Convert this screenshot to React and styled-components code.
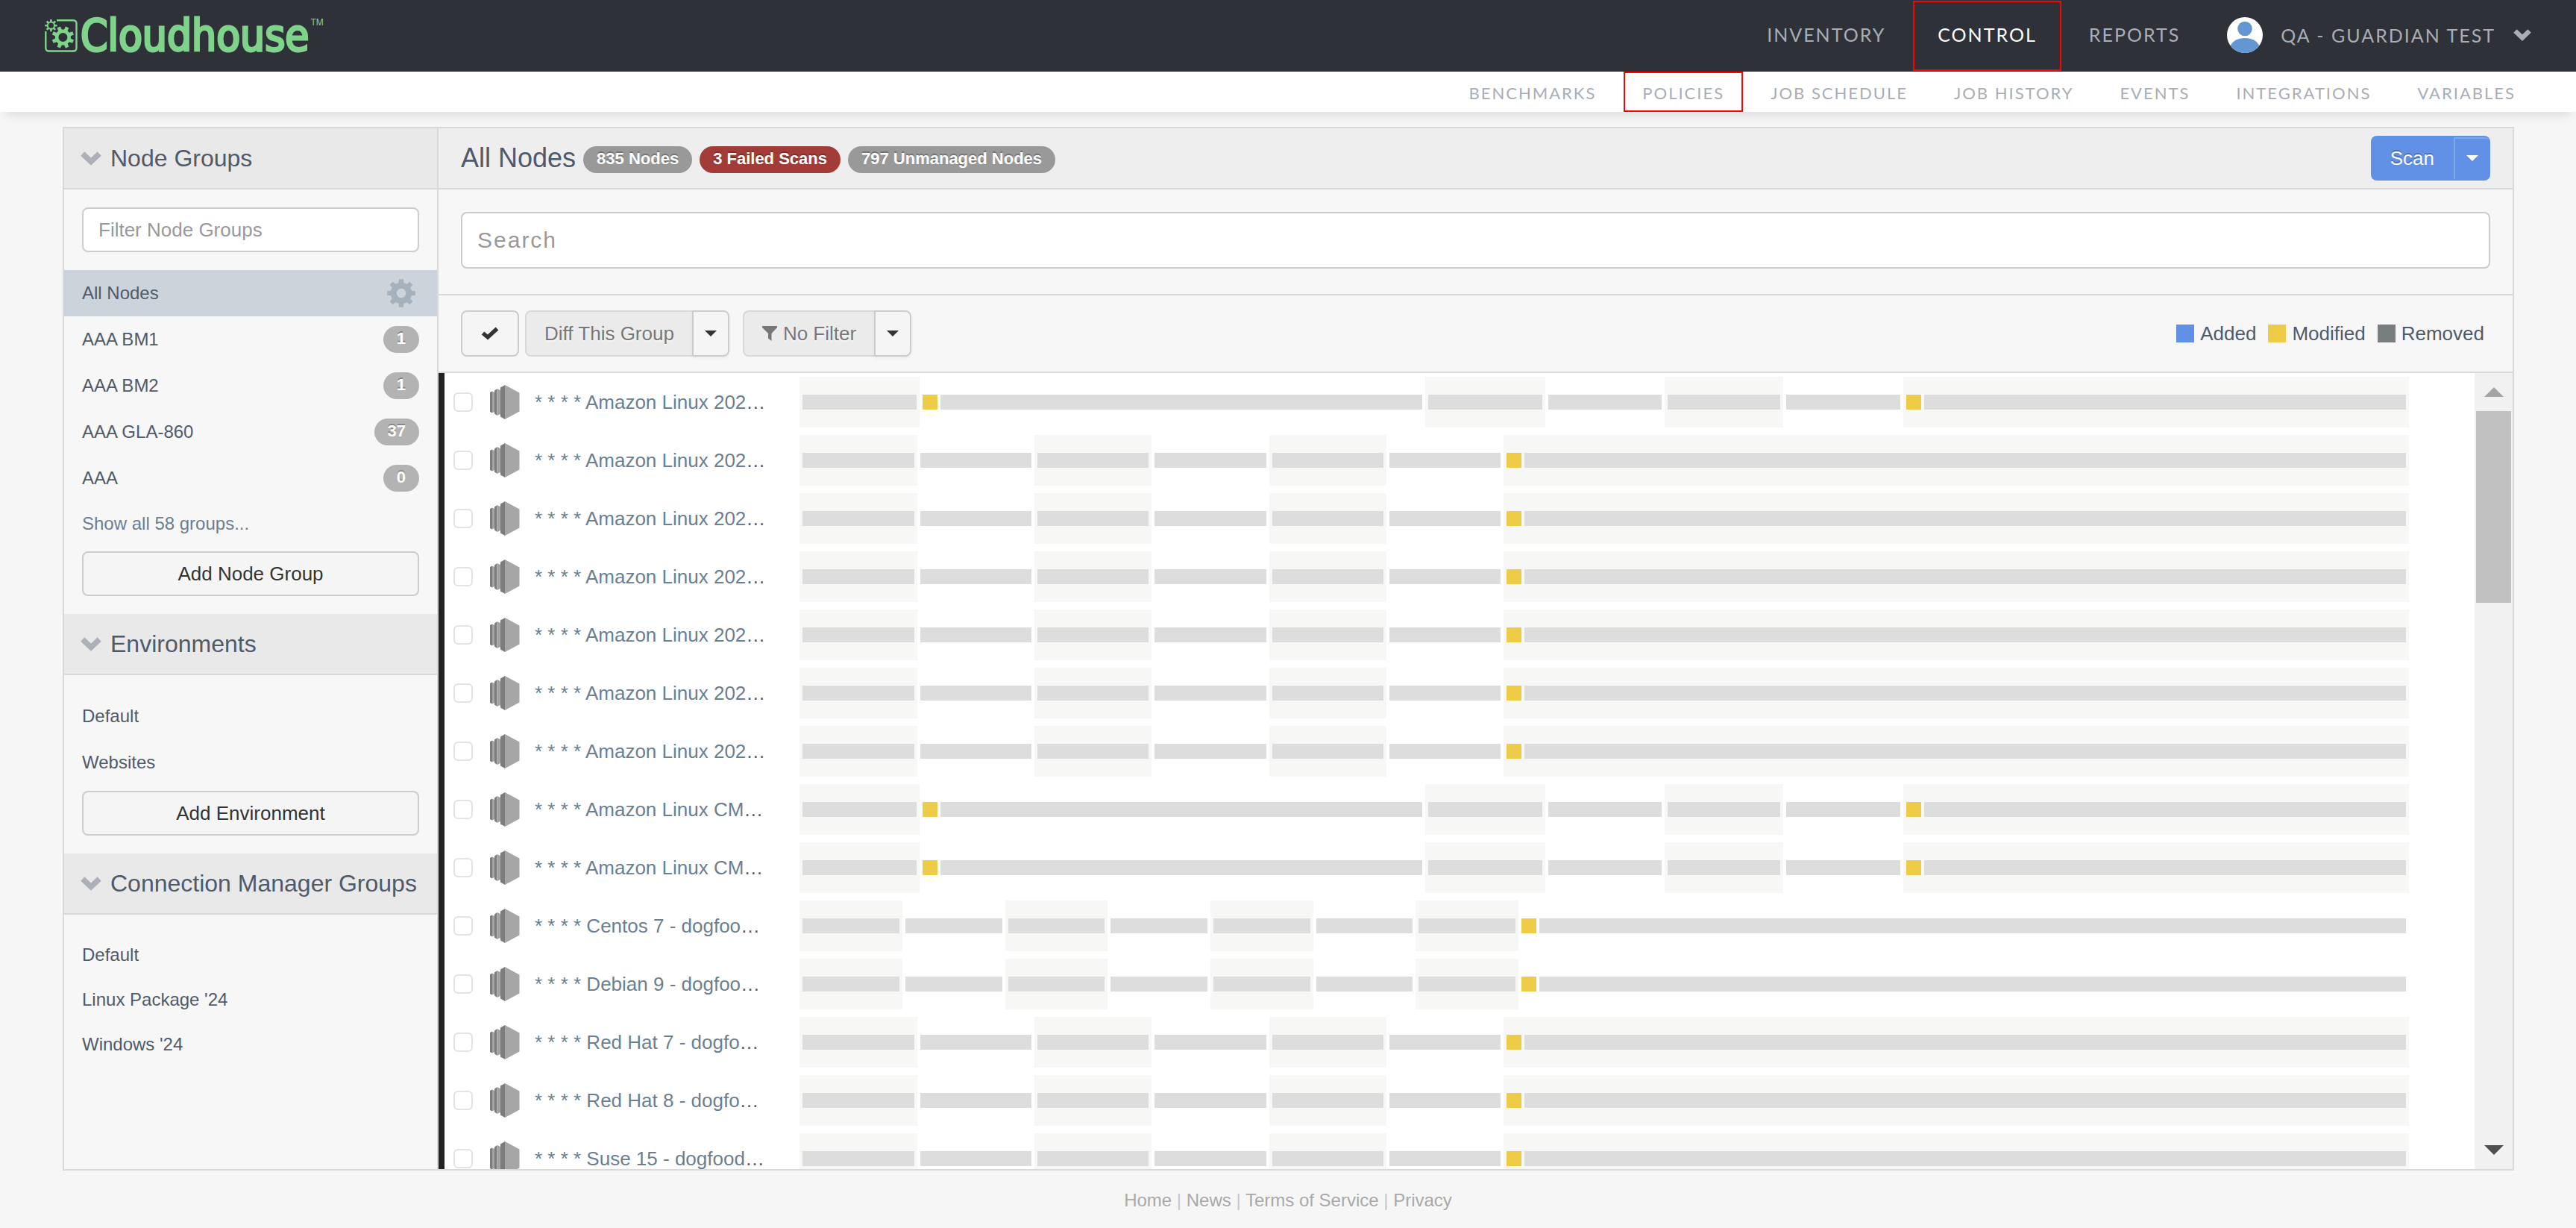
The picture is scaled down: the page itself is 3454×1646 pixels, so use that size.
import React from "react"
import styled, { createGlobalStyle, ThemeProvider } from "styled-components"

const theme = {
  colors: {
    dark: "#2f3139",
    brand: "#7fd38a",
    page: "#f6f6f6",
    panel: "#f7f7f7",
    line: "#d9d9d9",
    text: "#4f5a6b",
    link: "#6b7f91",
    navText: "#a9adb5",
    added: "#6091e7",
    modified: "#efcc47",
    removed: "#787d80",
    bar: "#dddddd",
    highlight: "#ff0000",
  },
  fonts: {
    main: `"Liberation Sans", Arial, sans-serif`,
    nav: `Lato, sans-serif`,
    logo: `"DejaVu Sans Condensed", "DejaVu Sans", sans-serif`,
  },
}

const mainNav = [
  { label: "Inventory" },
  { label: "Control", active: true, marked: true },
  { label: "Reports" },
]

const subNav = [
  { label: "Benchmarks" },
  { label: "Policies", marked: true },
  { label: "Job Schedule" },
  { label: "Job History" },
  { label: "Events" },
  { label: "Integrations" },
  { label: "Variables" },
]

const nodeGroups = [
  { name: "AAA BM1", count: 1 },
  { name: "AAA BM2", count: 1 },
  { name: "AAA GLA-860", count: 37 },
  { name: "AAA", count: 0 },
]

const environments = ["Default", "Websites"]

const managerGroups = ["Default", "Linux Package '24", "Windows '24"]

// Every block is one scan period, `size` is its share of the timeline
const block = (size, modified = false) => ({ size, modified })

const timelines = {
  early: [
    block(161),
    block(678, true),
    block(161),
    block(160),
    block(159),
    block(161),
    block(678, true),
  ],
  six: [
    block(158),
    block(157),
    block(157),
    block(158),
    block(157),
    block(157),
    block(1214, true),
  ],
  seven: [
    block(138),
    block(138),
    block(137),
    block(138),
    block(138),
    block(137),
    block(138),
    block(1194, true),
  ],
}

const nodes = [
  { name: "* * * * Amazon Linux 202", timeline: "early" },
  { name: "* * * * Amazon Linux 202", timeline: "six" },
  { name: "* * * * Amazon Linux 202", timeline: "six" },
  { name: "* * * * Amazon Linux 202", timeline: "six" },
  { name: "* * * * Amazon Linux 202", timeline: "six" },
  { name: "* * * * Amazon Linux 202", timeline: "six" },
  { name: "* * * * Amazon Linux 202", timeline: "six" },
  { name: "* * * * Amazon Linux CM", timeline: "early" },
  { name: "* * * * Amazon Linux CM", timeline: "early" },
  { name: "* * * * Centos 7 - dogfoo", timeline: "seven" },
  { name: "* * * * Debian 9 - dogfoo", timeline: "seven" },
  { name: "* * * * Red Hat 7 - dogfo", timeline: "six" },
  { name: "* * * * Red Hat 8 - dogfo", timeline: "six" },
  { name: "* * * * Suse 15 - dogfood", timeline: "six" },
]

const gearPath = (cx, cy, outer, inner, hole, teeth) => {
  const step = (Math.PI * 2) / teeth
  const at = (r, a) =>
    `${(cx + r * Math.sin(a)).toFixed(2)} ${(cy - r * Math.cos(a)).toFixed(2)}`
  const points = []
  for (let i = 0; i < teeth; i++) {
    const a = i * step
    points.push(
      at(inner, a - step * 0.3),
      at(outer, a - step * 0.2),
      at(outer, a + step * 0.2),
      at(inner, a + step * 0.3)
    )
  }
  return `M${points.join("L")}ZM${cx - hole} ${cy}a${hole} ${hole} 0 1 0 ${
    hole * 2
  } 0a${hole} ${hole} 0 1 0 ${-hole * 2} 0Z`
}

const LogoMark = () => (
  <svg width="44" height="46" viewBox="0 0 44 46" aria-hidden="true">
    <path
      d="M16 2.2H38.5a4 4 0 0 1 4 4V39.5a4 4 0 0 1-4 4H5.3a4 4 0 0 1-4-4V17"
      fill="none"
      stroke="currentColor"
      strokeWidth="2.4"
    />
    <path
      d={gearPath(8.4, 9.2, 8.2, 5.6, 3.6, 8)}
      fill="currentColor"
      fillRule="evenodd"
    />
    <path
      d={gearPath(24.4, 25, 15, 10.6, 6, 8)}
      fill="currentColor"
      fillRule="evenodd"
      transform="rotate(22.5 24.4 25)"
    />
  </svg>
)

const Avatar = () => (
  <svg width="48" height="48" viewBox="0 0 48 48" aria-hidden="true">
    <clipPath id="avatar-clip">
      <circle cx="24" cy="24" r="24" />
    </clipPath>
    <g clipPath="url(#avatar-clip)">
      <rect width="48" height="48" fill="#fff" />
      <circle cx="24" cy="15.5" r="9.8" fill="#6297d2" />
      <ellipse cx="24" cy="42" rx="20" ry="14" fill="#6297d2" />
    </g>
  </svg>
)

const Chevron = ({ size = 28 }) => (
  <svg width={size} height={(size * 19) / 28} viewBox="0 0 28 19" aria-hidden="true">
    <path d="M2.8 3L14 13.6L25.2 3" fill="none" stroke="currentColor" strokeWidth="7.4" />
  </svg>
)

const Gear = () => (
  <svg width="38" height="38" viewBox="0 0 38 38" aria-hidden="true">
    <path
      d={gearPath(19, 19, 19, 14.4, 6.2, 8)}
      fill="currentColor"
      fillRule="evenodd"
    />
  </svg>
)

const Check = () => (
  <svg width="24" height="18" viewBox="0 0 24 18" aria-hidden="true">
    <path d="M2.5 8.5L9 14L21.5 2.5" fill="none" stroke="#333" strokeWidth="5.4" />
  </svg>
)

const Funnel = () => (
  <svg width="20" height="20" viewBox="0 0 20 20" aria-hidden="true">
    <path d="M0 0H20V2L12.5 10V20L8 16.5V10L0 2Z" fill="currentColor" />
  </svg>
)

const Caret = () => (
  <svg width="16" height="8" viewBox="0 0 16 8" aria-hidden="true">
    <path d="M0 0H16L8 8Z" fill="currentColor" />
  </svg>
)

const ServerIcon = () => (
  <svg width="40" height="46" viewBox="0 0 40 46" aria-hidden="true">
    <path d="M0 10L3 8.5V37.5L0 36Z" fill="#7c7c7c" />
    <path d="M3 8.5L6 10V36L3 37.5Z" fill="#a3a3a3" />
    <path d="M6 7.5L9.5 5V41L6 38.5Z" fill="#7c7c7c" />
    <path d="M9.5 5L14 7V39L9.5 41Z" fill="#a3a3a3" />
    <path d="M14 3.5L20 0V46L14 42.5Z" fill="#7c7c7c" />
    <path d="M20 0L39.5 10.5V35.5L20 46Z" fill="#a6a6a6" />
  </svg>
)

const SidebarHead = ({ children }) => (
  <SideHeading>
    <Chevron />
    {children}
  </SideHeading>
)

const NodeRow = ({ name, timeline }) => (
  <Row>
    <NodeCheck type="checkbox" aria-label={`Select ${name}`} />
    <ServerIcon />
    <NodeName>
      <a href="#node">{name}</a>…
    </NodeName>
    <Timeline $sizes={timelines[timeline].map(({ size }) => size)}>
      {timelines[timeline].map(({ modified }, i) => (
        <Block key={i}>
          {modified ? <Marker /> : null}
          <Bar />
        </Block>
      ))}
    </Timeline>
  </Row>
)

const App = () => (
  <ThemeProvider theme={theme}>
    <GlobalStyle />
    <Page>
      <TopBar>
        <Logo href="#home">
          <LogoMark />
          <LogoText>Cloudhouse</LogoText>
          <Trademark>TM</Trademark>
        </Logo>
        <MainNav>
          {mainNav.map(({ label, active, marked }) => (
            <MainLink key={label} href="#nav" $active={active} $marked={marked}>
              {label}
            </MainLink>
          ))}
          <Account>
            <Avatar />
            QA - Guardian Test
            <Chevron size={24} />
          </Account>
        </MainNav>
      </TopBar>
      <SubNav>
        {subNav.map(({ label, marked }) => (
          <SubLink key={label} href="#sub" $marked={marked}>
            {label}
          </SubLink>
        ))}
      </SubNav>

      <Panel>
        <Sidebar>
          <SidebarHead>Node Groups</SidebarHead>
          <FilterWrapper>
            <FilterInput
              type="text"
              placeholder="Filter Node Groups"
              aria-label="Filter Node Groups"
            />
          </FilterWrapper>
          <SideList>
            <SideItem $selected>
              <a href="#all">All Nodes</a>
              <GearButton aria-label="Group settings">
                <Gear />
              </GearButton>
            </SideItem>
            {nodeGroups.map(({ name, count }) => (
              <SideItem key={name}>
                <a href="#group">{name}</a>
                <Badge $tone="#b3b3b3">{count}</Badge>
              </SideItem>
            ))}
            <SideItem $muted $compact>
              <a href="#groups">Show all 58 groups...</a>
            </SideItem>
          </SideList>
          <SideButton>Add Node Group</SideButton>

          <SidebarHead>Environments</SidebarHead>
          <SideList $spaced>
            {environments.map(name => (
              <SideItem key={name}>
                <a href="#environment">{name}</a>
              </SideItem>
            ))}
          </SideList>
          <SideButton>Add Environment</SideButton>

          <SidebarHead>Connection Manager Groups</SidebarHead>
          <SideList $spaced>
            {managerGroups.map(name => (
              <SideItem key={name} $compact>
                <a href="#manager">{name}</a>
              </SideItem>
            ))}
          </SideList>
        </Sidebar>

        <Main>
          <MainHead>
            <Title>All Nodes</Title>
            <HeadBadge $tone="#999999">835 Nodes</HeadBadge>
            <HeadBadge $tone="#a33c36">3 Failed Scans</HeadBadge>
            <HeadBadge $tone="#999999">797 Unmanaged Nodes</HeadBadge>
            <ScanGroup>
              <ScanButton>Scan</ScanButton>
              <ScanToggle aria-label="Scan options">
                <Caret />
              </ScanToggle>
            </ScanGroup>
          </MainHead>
          <SearchWrapper>
            <SearchInput type="text" placeholder="Search" aria-label="Search" />
          </SearchWrapper>
          <Toolbar>
            <CheckButton aria-label="Select all">
              <Check />
            </CheckButton>
            <ButtonGroup>
              <GroupButton disabled>Diff This Group</GroupButton>
              <GroupToggle aria-label="Diff options">
                <Caret />
              </GroupToggle>
            </ButtonGroup>
            <ButtonGroup>
              <GroupButton disabled>
                <Funnel />
                No Filter
              </GroupButton>
              <GroupToggle aria-label="Filter options">
                <Caret />
              </GroupToggle>
            </ButtonGroup>
            <Legend>
              <LegendItem $color={theme.colors.added}>Added</LegendItem>
              <LegendItem $color={theme.colors.modified}>Modified</LegendItem>
              <LegendItem $color={theme.colors.removed}>Removed</LegendItem>
            </Legend>
          </Toolbar>
          <ListArea>
            <Rows>
              {nodes.map((node, i) => (
                <NodeRow key={i} {...node} />
              ))}
            </Rows>
            <Scrollbar>
              <ScrollArrow $color="#a3a3a3" aria-label="Scroll up">
                <svg width="26" height="13" viewBox="0 0 26 13">
                  <path d="M13 0L26 13H0Z" fill="currentColor" />
                </svg>
              </ScrollArrow>
              <ScrollTrack>
                <ScrollThumb />
              </ScrollTrack>
              <ScrollArrow $color="#505050" aria-label="Scroll down">
                <svg width="26" height="13" viewBox="0 0 26 13">
                  <path d="M0 0H26L13 13Z" fill="currentColor" />
                </svg>
              </ScrollArrow>
            </Scrollbar>
          </ListArea>
        </Main>
      </Panel>

      <Footer>
        <a href="#home">Home</a> | <a href="#news">News</a> |{" "}
        <a href="#terms">Terms of Service</a> | <a href="#privacy">Privacy</a>
      </Footer>
    </Page>
  </ThemeProvider>
)

const GlobalStyle = createGlobalStyle`
  * {
    box-sizing: border-box;
  }

  body {
    margin: 0;
    background-color: ${({ theme }) => theme.colors.page};
    color: ${({ theme }) => theme.colors.text};
    font-family: ${({ theme }) => theme.fonts.main};
    font-size: 26px;
  }

  a {
    color: inherit;
    text-decoration: none;
  }

  button,
  input {
    margin: 0;
    font-family: inherit;
    font-size: 26px;
  }

  svg {
    display: block;
    flex-shrink: 0;
  }
`

const Page = styled.div`
  display: flex;
  flex-direction: column;
  height: 100vh;
`

const TopBar = styled.header`
  display: flex;
  justify-content: space-between;
  flex-shrink: 0;
  height: 96px;
  padding: 0 60px;
  background-color: ${({ theme }) => theme.colors.dark};
`

const Logo = styled.a`
  display: flex;
  align-items: center;
  color: ${({ theme }) => theme.colors.brand};
`

const LogoText = styled.span`
  margin-left: 4px;
  font-family: ${({ theme }) => theme.fonts.logo};
  font-size: 58px;
  line-height: 64px;
  -webkit-text-stroke: 3px currentColor;
`

const Trademark = styled.span`
  align-self: flex-start;
  margin: 22px 0 0 2px;
  font-size: 12px;
  line-height: 16px;
`

const MainNav = styled.nav`
  display: flex;
  align-items: center;
  gap: 4px;
  color: ${({ theme }) => theme.colors.navText};
  font-family: ${({ theme }) => theme.fonts.nav};
  font-size: 25px;
  letter-spacing: 2px;
  text-transform: uppercase;
`

const MainLink = styled.a`
  display: flex;
  align-items: center;
  height: 94px;
  padding: 0 31px 4px;
  border: 2px solid
    ${({ $marked, theme }) => ($marked ? theme.colors.highlight : "transparent")};
  color: ${({ $active }) => ($active ? "#fff" : "inherit")};
`

const Account = styled.button`
  display: flex;
  align-items: center;
  gap: 24px;
  margin-left: 26px;
  padding: 0 0 2px;
  border: 0;
  background: none;
  color: inherit;
  font-size: 25px;
  letter-spacing: inherit;
  text-transform: inherit;
`

const SubNav = styled.nav`
  display: flex;
  justify-content: flex-end;
  gap: 12px;
  flex-shrink: 0;
  height: 54px;
  padding: 0 56px;
  background-color: #fff;
  box-shadow: 0 10px 16px -8px rgba(0, 0, 0, 0.14);
  font-family: ${({ theme }) => theme.fonts.nav};
  font-size: 22px;
  letter-spacing: 2px;
  text-transform: uppercase;
`

const SubLink = styled.a`
  display: flex;
  align-items: center;
  padding: 2px 23px 0;
  border: 2px solid
    ${({ $marked, theme }) => ($marked ? theme.colors.highlight : "transparent")};
  color: ${({ theme }) => theme.colors.navText};
`

const Panel = styled.div`
  display: flex;
  flex: 1;
  min-height: 0;
  margin: 20px 83px 0 84px;
  border: 2px solid ${({ theme }) => theme.colors.line};
  background-color: ${({ theme }) => theme.colors.panel};
`

const Sidebar = styled.aside`
  flex-shrink: 0;
  width: 502px;
  border-right: 2px solid ${({ theme }) => theme.colors.line};
  overflow: hidden;
`

const SideHeading = styled.h2`
  display: flex;
  align-items: center;
  gap: 12px;
  height: 82px;
  margin: 0;
  padding-left: 22px;
  border-bottom: 2px solid ${({ theme }) => theme.colors.line};
  background-color: #e9e9e9;
  font-size: 32px;
  font-weight: normal;
  white-space: nowrap;

  svg {
    color: #adb0b8;
  }
`

const FilterWrapper = styled.div`
  padding: 24px;
`

const FilterInput = styled.input`
  display: block;
  width: 100%;
  height: 60px;
  padding: 0 20px;
  border: 2px solid #cccccc;
  border-radius: 8px;
  background-color: #fff;

  &::placeholder {
    color: #999999;
  }
`

const SideList = styled.ul`
  margin: 0;
  padding: ${({ $spaced }) => ($spaced ? "24px 0 0" : "0")};
  list-style-type: none;
`

const SideItem = styled.li`
  display: flex;
  align-items: center;
  justify-content: space-between;
  height: ${({ $compact }) => ($compact ? "60px" : "62px")};
  padding: 0 24px;
  background-color: ${({ $selected }) => ($selected ? "#ccd3db" : "transparent")};
  color: ${({ $muted, theme }) => ($muted ? theme.colors.link : "inherit")};
  font-size: 24px;
`

const GearButton = styled.button`
  padding: 0 5px;
  border: 0;
  background: none;
  color: #a5b2bd;
`

const Badge = styled.span`
  height: 36px;
  padding: 0 18px;
  border-radius: 18px;
  background-color: ${({ $tone }) => $tone};
  color: #fff;
  font-size: 22px;
  font-weight: bold;
  line-height: 34px;
  text-shadow: 0 -2px 0 rgba(0, 0, 0, 0.25);
`

const HeadBadge = styled(Badge)`
  margin-top: 4px;
`

const Button = styled.button`
  display: flex;
  align-items: center;
  justify-content: center;
  height: 62px;
  border: 2px solid #cccccc;
  border-radius: 8px;
  background-color: #f5f5f5;
  color: #333333;
  text-shadow: 0 2px 2px rgba(255, 255, 255, 0.75);
`

const SideButton = styled(Button)`
  width: 452px;
  height: 60px;
  margin: 7px 24px 24px;
`

const Main = styled.main`
  display: flex;
  flex: 1;
  flex-direction: column;
  min-width: 0;
`

const MainHead = styled.div`
  display: flex;
  align-items: center;
  gap: 10px;
  flex-shrink: 0;
  height: 82px;
  padding: 0 30px;
  border-bottom: 2px solid ${({ theme }) => theme.colors.line};
  background-color: #eeeeee;
`

const Title = styled.h1`
  margin: 0;
  font-size: 36px;
  font-weight: normal;
`

const ScanGroup = styled.div`
  display: flex;
  margin-left: auto;
`

const ScanButton = styled(Button)`
  height: 60px;
  padding: 0 24px;
  border: 2px solid ${({ theme }) => theme.colors.added};
  border-right: 0;
  border-radius: 8px 0 0 8px;
  background-color: ${({ theme }) => theme.colors.added};
  color: #fff;
  text-shadow: 0 -2px 0 rgba(0, 0, 0, 0.25);
`

const ScanToggle = styled(ScanButton)`
  width: 51px;
  padding: 0;
  border-radius: 0 8px 8px 0;
  box-shadow: inset 2px 2px 0 rgba(255, 255, 255, 0.2);
`

const SearchWrapper = styled.div`
  flex-shrink: 0;
  padding: 30px 30px 34px;
  border-bottom: 2px solid ${({ theme }) => theme.colors.line};
`

const SearchInput = styled(FilterInput)`
  height: 76px;
  font-size: 30px;
  letter-spacing: 2px;
`

const Toolbar = styled.div`
  display: flex;
  align-items: center;
  flex-shrink: 0;
  height: 104px;
  padding: 0 30px;
  border-bottom: 2px solid ${({ theme }) => theme.colors.line};
`

const CheckButton = styled(Button)`
  width: 78px;
  margin-right: 8px;
`

const ButtonGroup = styled.div`
  display: flex;
  margin-right: 18px;
`

const GroupButton = styled(Button)`
  gap: 8px;
  padding: 0 24px;
  border-color: #d9d9d9;
  border-right: 0;
  border-radius: 8px 0 0 8px;
  background-color: #ebebeb;
  color: #777777;
`

const GroupToggle = styled(Button)`
  width: 50px;
  padding: 0;
  border-radius: 0 8px 8px 0;
  box-shadow: 0 2px 4px rgba(0, 0, 0, 0.05);
`

const Legend = styled.div`
  display: flex;
  gap: 16px;
  margin-left: auto;
  padding-right: 8px;
`

const LegendItem = styled.span`
  display: flex;
  align-items: center;
  gap: 8px;

  &:before {
    content: "";
    width: 24px;
    height: 24px;
    background-color: ${({ $color }) => $color};
  }
`

const ListArea = styled.div`
  display: flex;
  flex: 1;
  min-height: 0;
  border-left: 8px solid #222222;
  background-color: #fff;
`

const Rows = styled.ul`
  flex: 1;
  min-width: 0;
  margin: 0;
  padding: 0 88px 0 12px;
  list-style-type: none;
  overflow: hidden;
`

const Row = styled.li`
  display: flex;
  align-items: center;
  height: 78px;
`

const NodeCheck = styled.input`
  flex-shrink: 0;
  width: 26px;
  height: 26px;
  margin-right: 23px;
  border: 2px solid #e3e3e3;
  border-radius: 6px;
  background-color: #fff;
  appearance: none;
`

const NodeName = styled.span`
  flex-shrink: 0;
  width: 375px;
  padding-left: 20px;
  white-space: nowrap;

  a {
    color: ${({ theme }) => theme.colors.link};
  }
`

const Timeline = styled.div`
  display: grid;
  grid-template-columns: ${({ $sizes }) =>
    $sizes.map(size => `minmax(0, ${size}fr)`).join(" ")};
  flex: 1;
  min-width: 0;
`

const Block = styled.div`
  display: flex;
  align-items: center;
  gap: 4px;
  height: 68px;
  padding: 0 4px;

  &:nth-child(odd) {
    background-color: #f7f7f5;
  }
`

const Bar = styled.div`
  flex: 1;
  height: 20px;
  background-color: ${({ theme }) => theme.colors.bar};
`

const Marker = styled.div`
  width: 20px;
  height: 20px;
  background-color: ${({ theme }) => theme.colors.modified};
`

const Scrollbar = styled.div`
  display: flex;
  flex-direction: column;
  flex-shrink: 0;
  width: 51px;
  background-color: #f1f1f1;
`

const ScrollArrow = styled.button`
  display: flex;
  align-items: center;
  justify-content: center;
  height: 51px;
  padding: 0;
  border: 0;
  background: none;
  color: ${({ $color }) => $color};
`

const ScrollTrack = styled.div`
  flex: 1;
  padding: 0 2px;
`

const ScrollThumb = styled.div`
  height: 257px;
  background-color: #c1c1c1;
`

const Footer = styled.footer`
  flex-shrink: 0;
  height: 77px;
  color: #c9c3d0;
  font-size: 24px;
  line-height: 80px;
  text-align: center;

  a {
    color: #a9a9a9;
  }
`

export default App
